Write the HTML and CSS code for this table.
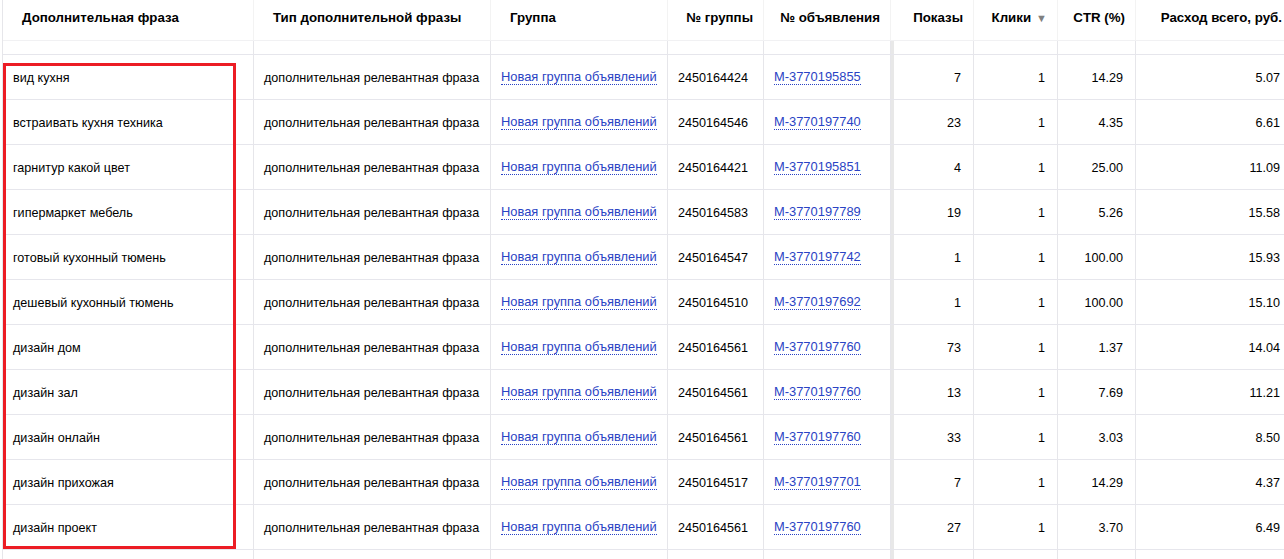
FILE: index.html
```html
<!DOCTYPE html>
<html lang="ru">
<head>
<meta charset="utf-8">
<title>Дополнительные фразы</title>
<link rel="stylesheet" href="styles.css">
</head>
<body>
<div class="page">
  <div class="grid">
    <div class="row head">
      <div class="c">Дополнительная фраза</div>
      <div class="c">Тип дополнительной фразы</div>
      <div class="c">Группа</div>
      <div class="c r">№ группы</div>
      <div class="c r">№ объявления</div>
      <div class="c r">Показы</div>
      <div class="c r">Клики <span class="sort">▼</span></div>
      <div class="c r">CTR (%)</div>
      <div class="c r">Расход всего, руб.</div>
    </div>
    <div class="row spacer">
      <div class="c"></div><div class="c"></div><div class="c"></div><div class="c"></div><div class="c"></div><div class="c thick"></div><div class="c"></div><div class="c"></div><div class="c"></div>
    </div>
    <div class="row">
      <div class="c">вид кухня</div><div class="c">дополнительная релевантная фраза</div><div class="c"><a class="lnk">Новая группа объявлений</a></div><div class="c">2450164424</div><div class="c"><a class="lnk">M-3770195855</a></div><div class="c r thick">7</div><div class="c r">1</div><div class="c r">14.29</div><div class="c r">5.07</div>
    </div>
    <div class="row">
      <div class="c">встраивать кухня техника</div><div class="c">дополнительная релевантная фраза</div><div class="c"><a class="lnk">Новая группа объявлений</a></div><div class="c">2450164546</div><div class="c"><a class="lnk">M-3770197740</a></div><div class="c r thick">23</div><div class="c r">1</div><div class="c r">4.35</div><div class="c r">6.61</div>
    </div>
    <div class="row">
      <div class="c">гарнитур какой цвет</div><div class="c">дополнительная релевантная фраза</div><div class="c"><a class="lnk">Новая группа объявлений</a></div><div class="c">2450164421</div><div class="c"><a class="lnk">M-3770195851</a></div><div class="c r thick">4</div><div class="c r">1</div><div class="c r">25.00</div><div class="c r">11.09</div>
    </div>
    <div class="row">
      <div class="c">гипермаркет мебель</div><div class="c">дополнительная релевантная фраза</div><div class="c"><a class="lnk">Новая группа объявлений</a></div><div class="c">2450164583</div><div class="c"><a class="lnk">M-3770197789</a></div><div class="c r thick">19</div><div class="c r">1</div><div class="c r">5.26</div><div class="c r">15.58</div>
    </div>
    <div class="row">
      <div class="c">готовый кухонный тюмень</div><div class="c">дополнительная релевантная фраза</div><div class="c"><a class="lnk">Новая группа объявлений</a></div><div class="c">2450164547</div><div class="c"><a class="lnk">M-3770197742</a></div><div class="c r thick">1</div><div class="c r">1</div><div class="c r">100.00</div><div class="c r">15.93</div>
    </div>
    <div class="row">
      <div class="c">дешевый кухонный тюмень</div><div class="c">дополнительная релевантная фраза</div><div class="c"><a class="lnk">Новая группа объявлений</a></div><div class="c">2450164510</div><div class="c"><a class="lnk">M-3770197692</a></div><div class="c r thick">1</div><div class="c r">1</div><div class="c r">100.00</div><div class="c r">15.10</div>
    </div>
    <div class="row">
      <div class="c">дизайн дом</div><div class="c">дополнительная релевантная фраза</div><div class="c"><a class="lnk">Новая группа объявлений</a></div><div class="c">2450164561</div><div class="c"><a class="lnk">M-3770197760</a></div><div class="c r thick">73</div><div class="c r">1</div><div class="c r">1.37</div><div class="c r">14.04</div>
    </div>
    <div class="row">
      <div class="c">дизайн зал</div><div class="c">дополнительная релевантная фраза</div><div class="c"><a class="lnk">Новая группа объявлений</a></div><div class="c">2450164561</div><div class="c"><a class="lnk">M-3770197760</a></div><div class="c r thick">13</div><div class="c r">1</div><div class="c r">7.69</div><div class="c r">11.21</div>
    </div>
    <div class="row">
      <div class="c">дизайн онлайн</div><div class="c">дополнительная релевантная фраза</div><div class="c"><a class="lnk">Новая группа объявлений</a></div><div class="c">2450164561</div><div class="c"><a class="lnk">M-3770197760</a></div><div class="c r thick">33</div><div class="c r">1</div><div class="c r">3.03</div><div class="c r">8.50</div>
    </div>
    <div class="row">
      <div class="c">дизайн прихожая</div><div class="c">дополнительная релевантная фраза</div><div class="c"><a class="lnk">Новая группа объявлений</a></div><div class="c">2450164517</div><div class="c"><a class="lnk">M-3770197701</a></div><div class="c r thick">7</div><div class="c r">1</div><div class="c r">14.29</div><div class="c r">4.37</div>
    </div>
    <div class="row">
      <div class="c">дизайн проект</div><div class="c">дополнительная релевантная фраза</div><div class="c"><a class="lnk">Новая группа объявлений</a></div><div class="c">2450164561</div><div class="c"><a class="lnk">M-3770197760</a></div><div class="c r thick">27</div><div class="c r">1</div><div class="c r">3.70</div><div class="c r">6.49</div>
    </div>
    <div class="row">
      <div class="c"></div><div class="c"></div><div class="c"></div><div class="c"></div><div class="c"></div><div class="c thick"></div><div class="c"></div><div class="c"></div><div class="c"></div>
    </div>
  </div>
  <div class="highlight"></div>
</div>
</body>
</html>
```
FILE: styles.css
```css
html, body {
  margin: 0;
  padding: 0;
  background: #fff;
  overflow: hidden;
}
body {
  font-family: "Liberation Sans", Arial, sans-serif;
  font-size: 12.6px;
  color: #000;
}
.page {
  position: relative;
  width: 1284px;
  height: 559px;
  overflow: hidden;
  padding-left: 2px;
  box-sizing: border-box;
}
.grid {
  width: 1290px;
  border-left: 1px solid #e6e6ea;
}
.row {
  display: grid;
  grid-template-columns: 251px 237px 177px 96px 127px 83px 84px 78px 156px;
  height: 45px;
  box-sizing: border-box;
  border-bottom: 1px solid #e6e6ec;
}
.c {
  box-sizing: border-box;
  border-right: 1px solid #e6e6ea;
  padding: 1px 12px 0 10px;
  display: flex;
  align-items: center;
  white-space: nowrap;
  overflow: hidden;
}
.c.r {
  justify-content: flex-end;
}
.c.thick {
  border-left: 3px solid #e8e8e8;
}
.row > .c:nth-child(9) {
  border-right: none;
}
.head {
  height: 41px;
  border-bottom: 1px solid #f1f1f3;
  font-weight: bold;
  font-size: 13.3px;
}
.head .c {
  border-right-color: #f3f3f3;
  padding: 10px 11px 0 19px;
  align-items: flex-start;
}
.head .c.r {
  padding-right: 10px;
}
.sort {
  color: #808080;
  font-size: 11px;
  margin-left: 5px;
  margin-top: 2px;
}
.spacer {
  height: 14px;
}
.lnk {
  color: #2a43c4;
  font-size: 12.9px;
  text-decoration: none;
  border-bottom: 1px dotted #2a43c4;
  line-height: 14px;
  cursor: pointer;
}
.highlight {
  position: absolute;
  left: 3px;
  top: 63px;
  width: 233px;
  height: 486px;
  border: 3px solid #ec1c24;
  box-sizing: border-box;
  pointer-events: none;
}
```
